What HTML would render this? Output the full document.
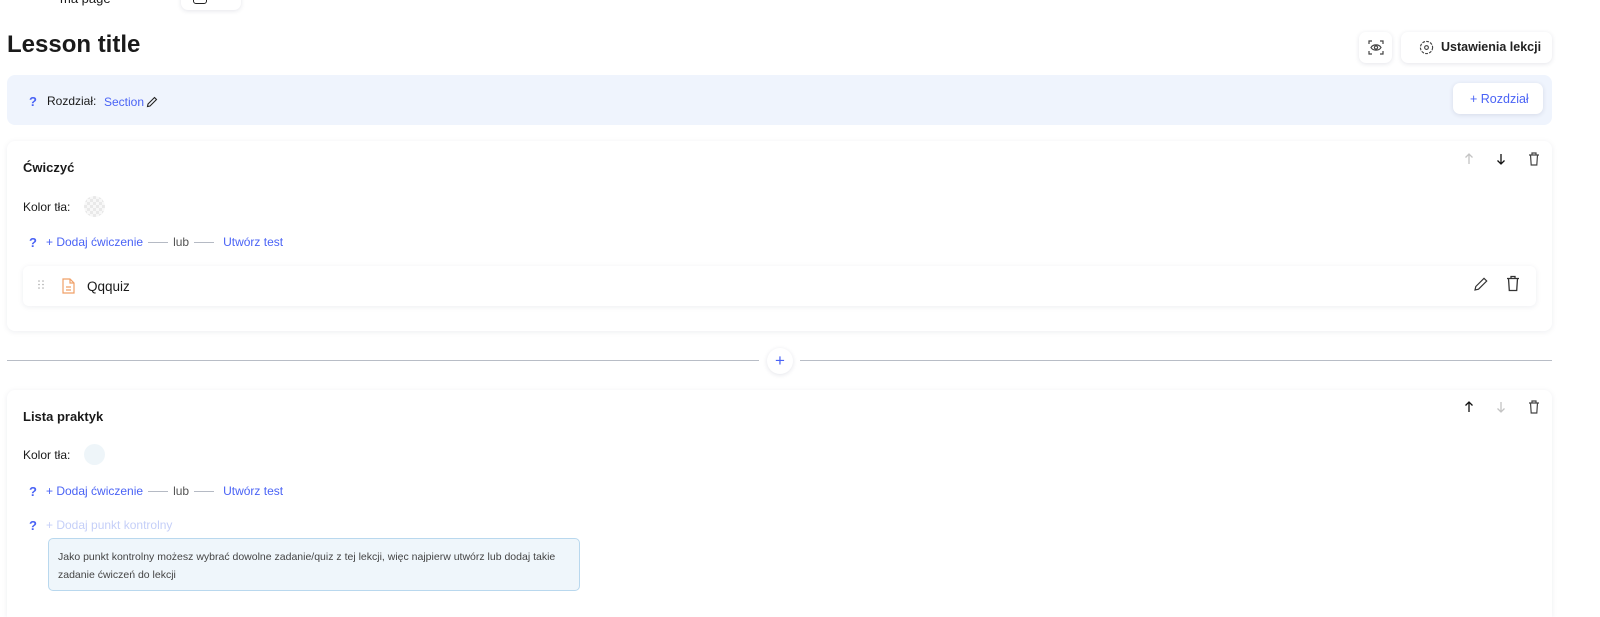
<!DOCTYPE html>
<html style="overflow:hidden"><head><meta charset="utf-8"><style>
*{box-sizing:border-box;margin:0;padding:0}
html,body{width:1600px;height:617px;overflow:hidden}
body{background:#fff;font-family:"Liberation Sans",sans-serif;color:#1a1a1a;position:relative}
.a{position:absolute}
.blue{color:#4a63f5}
.card{position:absolute;background:#fff;border-radius:8px;box-shadow:0 1px 6px rgba(30,40,80,.08)}
.btn{position:absolute;background:#fff;border-radius:7px;box-shadow:0 1px 5px rgba(30,40,80,.12)}
.line{display:inline-block;width:20px;height:1px;background:#b5bac4;vertical-align:middle;margin:0 5px}
.f13{font-size:13px}
</style></head><body>
<div class="a" style="left:60px;top:-9px;font-size:13px">ma page</div>
<div class="btn" style="left:181px;top:-8px;width:60px;height:18px"></div>
<div class="a" style="left:193px;top:-6px;width:14px;height:10px;border:1.5px solid #222;border-radius:3px"></div>

<div class="a" style="left:7px;top:31px;font-size:24px;font-weight:bold;color:#1a1a1a">Lesson title</div>
<div class="btn" style="left:1359px;top:32px;width:33px;height:31px"></div>
<svg class="a" style="left:1368px;top:40px" width="16" height="15" viewBox="0 0 16 15" fill="none" stroke="#444" stroke-width="1.2"><path d="M1 4V1h3M12 1h3v3M15 11v3h-3M4 14H1v-3"/><path d="M3 7.5C5 4 11 4 13 7.5 11 11 5 11 3 7.5z"/><circle cx="8" cy="7.5" r="1.6"/></svg>
<div class="btn" style="left:1401px;top:32px;width:151px;height:31px"></div>
<svg class="a" style="left:1419px;top:40px" width="15" height="15" viewBox="0 0 16 16" fill="none" stroke="#444" stroke-width="1.2"><circle cx="8" cy="8" r="6.5" stroke-dasharray="3 1.3"/><circle cx="8" cy="8" r="2"/></svg>
<div class="a" style="left:1441px;top:40px;font-size:12.5px;font-weight:bold;color:#222">Ustawienia lekcji</div>

<div class="a" style="left:7px;top:75px;width:1545px;height:50px;background:#eff4fd;border-radius:8px"></div>
<div class="a blue f13" style="left:29px;top:94px;font-weight:bold">?</div>
<div class="a" style="left:47px;top:94px;font-size:12px">Rozdział:</div>
<div class="a blue" style="left:104px;top:95px;font-size:12px">Section</div>
<svg class="a" style="left:146px;top:96px" width="12" height="12" viewBox="0 0 12 12" fill="none" stroke="#222" stroke-width="1.1"><path d="M1.5 10.5l.5-2.5 6.5-6.5 2 2L4 10z"/></svg>
<div class="btn" style="left:1453px;top:83px;width:90px;height:31px"></div>
<div class="a blue" style="left:1470px;top:92px;font-size:12.5px">+ Rozdział</div>

<div class="card" style="left:7px;top:141px;width:1545px;height:190px"></div>
<div class="a" style="left:23px;top:160px;font-size:13px;font-weight:bold">Ćwiczyć</div>
<svg class="a" style="left:1464px;top:153px" width="10" height="12" viewBox="0 0 10 12" fill="none" stroke="#c4c4c4" stroke-width="1.3"><path d="M5 11V1M1.5 4.5L5 1l3.5 3.5"/></svg>
<svg class="a" style="left:1496px;top:153px" width="10" height="12" viewBox="0 0 10 12" fill="none" stroke="#111" stroke-width="1.3"><path d="M5 1v10M1.5 7.5L5 11l3.5-3.5"/></svg>
<svg class="a" style="left:1528px;top:152px" width="12" height="14" viewBox="0 0 12 14" fill="none" stroke="#444" stroke-width="1.2"><path d="M1 3h10M4 3V1h4v2M2.5 3l.7 10h5.6l.7-10"/></svg>
<div class="a" style="left:23px;top:200px;font-size:12px">Kolor tła:</div>
<div class="a" style="left:84px;top:196px;width:21px;height:21px;border-radius:50%;background:repeating-conic-gradient(#e9e9e9 0 25%,#f8f8f8 0 50%) 0 0/6px 6px"></div>
<div class="a blue f13" style="left:29px;top:235px;font-weight:bold">?</div>
<div class="a" style="left:46px;top:235px;font-size:12px"><span class="blue">+ Dodaj ćwiczenie</span><span class="line"></span><span style="color:#555">lub</span><span class="line"></span><span class="blue" style="margin-left:4px">Utwórz test</span></div>
<div class="card" style="left:23px;top:266px;width:1513px;height:40px;border-radius:6px"></div>
<svg class="a" style="left:38px;top:280px" width="6" height="9" viewBox="0 0 6 9" fill="#aaa"><circle cx="1" cy="1" r=".8"/><circle cx="5" cy="1" r=".8"/><circle cx="1" cy="4.5" r=".8"/><circle cx="5" cy="4.5" r=".8"/><circle cx="1" cy="8" r=".8"/><circle cx="5" cy="8" r=".8"/></svg>
<svg class="a" style="left:62px;top:278px" width="13" height="16" viewBox="0 0 13 16" fill="none" stroke="#f0a068" stroke-width="1.2"><path d="M1 1h7l4 4v10H1z"/><path d="M8 1v4h4M4 9h5M4 12h5"/></svg>
<div class="a" style="left:87px;top:279px;font-size:13.5px">Qqquiz</div>
<svg class="a" style="left:1473px;top:276px" width="16" height="16" viewBox="0 0 16 16" fill="none" stroke="#333" stroke-width="1.2"><path d="M2 14l.8-3.5L11 2.3l2.7 2.7L5.5 13.2z"/></svg>
<svg class="a" style="left:1506px;top:275px" width="14" height="17" viewBox="0 0 14 17" fill="none" stroke="#333" stroke-width="1.3"><path d="M1 3.5h12M5 3.5V1.5h4v2M2.5 3.5l.8 12h7.4l.8-12"/></svg>

<div class="a" style="left:7px;top:360px;width:752px;height:1px;background:#b8bdc6"></div>
<div class="a" style="left:800px;top:360px;width:752px;height:1px;background:#b8bdc6"></div>
<div class="a" style="left:767px;top:348px;width:26px;height:26px;border-radius:50%;background:#fff;box-shadow:0 1px 5px rgba(30,40,80,.12);text-align:center;line-height:25px;font-size:17px;color:#4a63f5">+</div>

<div class="card" style="left:7px;top:390px;width:1545px;height:227px;border-bottom-left-radius:0;border-bottom-right-radius:0"></div>
<div class="a" style="left:23px;top:409px;font-size:13px;font-weight:bold">Lista praktyk</div>
<svg class="a" style="left:1464px;top:401px" width="10" height="12" viewBox="0 0 10 12" fill="none" stroke="#111" stroke-width="1.3"><path d="M5 11V1M1.5 4.5L5 1l3.5 3.5"/></svg>
<svg class="a" style="left:1496px;top:401px" width="10" height="12" viewBox="0 0 10 12" fill="none" stroke="#c4c4c4" stroke-width="1.3"><path d="M5 1v10M1.5 7.5L5 11l3.5-3.5"/></svg>
<svg class="a" style="left:1528px;top:400px" width="12" height="14" viewBox="0 0 12 14" fill="none" stroke="#444" stroke-width="1.2"><path d="M1 3h10M4 3V1h4v2M2.5 3l.7 10h5.6l.7-10"/></svg>
<div class="a" style="left:23px;top:448px;font-size:12px">Kolor tła:</div>
<div class="a" style="left:84px;top:444px;width:21px;height:21px;border-radius:50%;background:#eef5f9"></div>
<div class="a blue f13" style="left:29px;top:484px;font-weight:bold">?</div>
<div class="a" style="left:46px;top:484px;font-size:12px"><span class="blue">+ Dodaj ćwiczenie</span><span class="line"></span><span style="color:#555">lub</span><span class="line"></span><span class="blue" style="margin-left:4px">Utwórz test</span></div>
<div class="a blue f13" style="left:29px;top:518px;font-weight:bold">?</div>
<div class="a" style="left:46px;top:518px;font-size:12px;color:#c5cff8">+ Dodaj punkt kontrolny</div>
<div class="a" style="left:48px;top:538px;width:532px;height:53px;background:#eff6fb;border:1px solid #b9d8ee;border-radius:5px;padding:9px 9px;font-size:10.5px;line-height:18px;color:#444">Jako punkt kontrolny możesz wybrać dowolne zadanie/quiz z tej lekcji, więc najpierw utwórz lub dodaj takie zadanie ćwiczeń do lekcji</div>
</body></html>
